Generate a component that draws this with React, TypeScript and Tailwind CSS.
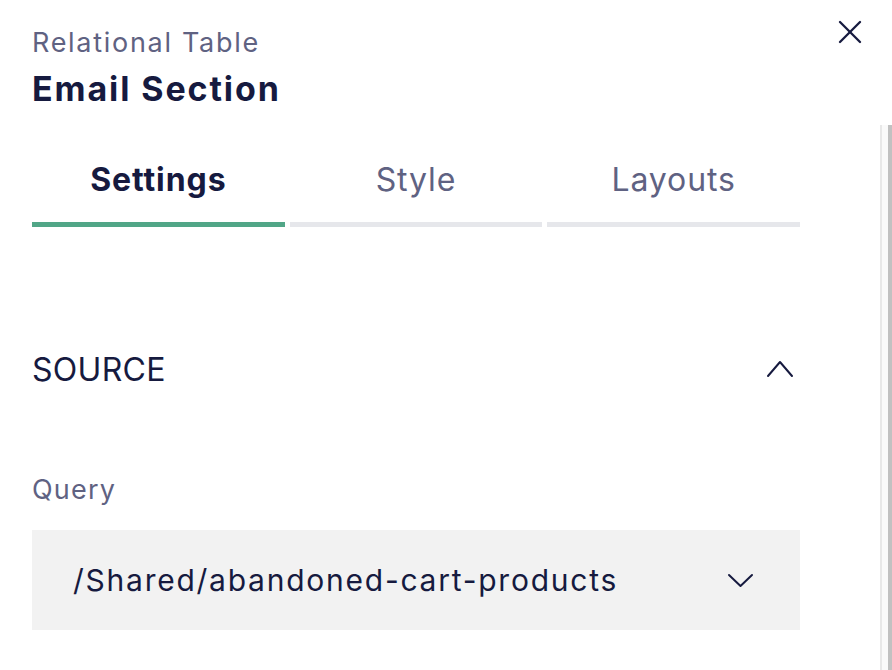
import { X } from 'lucide-react'

const tabs = ['Settings', 'Style', 'Layouts']

function Chevron({ up, w, h }: { up?: boolean; w: number; h: number }) {
  return (
    <svg width={w + 4} height={h + 4} viewBox={`0 0 ${w + 4} ${h + 4}`} fill="none" stroke="currentColor" strokeWidth={2} strokeLinecap="round" strokeLinejoin="round">
      {up ? (
        <path d={`M2 ${h + 2} L${w / 2 + 2} 2 L${w + 2} ${h + 2}`} />
      ) : (
        <path d={`M2 2 L${w / 2 + 2} ${h + 2} L${w + 2} 2`} />
      )}
    </svg>
  )
}

export default function App() {
  const active = 'Settings'

  return (
    <div className="w-[892px] h-[670px] bg-white flex flex-col overflow-hidden text-[#161a3f]" style={{ fontFamily: 'Inter, "Noto Sans", sans-serif' }}>
      <div className="h-[125px] shrink-0 flex justify-between pl-[32px] pr-[22px]">
        <div className="pt-[27px]">
          <div className="text-[27px] leading-[32px] tracking-[1.7px] text-[#5f6282]">Relational Table</div>
          <div className="mt-[10px] text-[34px] leading-[40px] font-bold tracking-[1.9px]">Email Section</div>
        </div>
        <button className="mt-[12px] h-[40px] w-[40px] flex items-center justify-center text-[#161a3f]">
          <X size={40} strokeWidth={1.4} />
        </button>
      </div>

      <div className="flex-1 flex">
        <div className="w-[880px] pl-[32px] pt-[35px]">
          <div className="w-[768px] grid grid-cols-3 gap-[5px]">
            {tabs.map(tab => (
              <button key={tab} className="flex flex-col items-center">
                <span className={`text-[32px] leading-[40px] tracking-[0.9px] ${tab === active ? 'font-bold text-[#161a3f]' : 'text-[#5f6282]'}`}>{tab}</span>
                <span className={`mt-[22px] h-[5px] w-full ${tab === active ? 'bg-[#51a687]' : 'bg-[#e6e7eb]'}`} />
              </button>
            ))}
          </div>

          <div className="w-[768px] mt-[123px] flex items-center justify-between">
            <span className="text-[32px] leading-[40px] tracking-[0.3px]">SOURCE</span>
            <span className="mr-[6px] mt-[-2px]">
              <Chevron up w={24} h={14} />
            </span>
          </div>

          <div className="mt-[84px] text-[27px] leading-[32px] tracking-[1.2px] text-[#5f6282]">Query</div>

          <div className="mt-[24px] w-[768px] h-[100px] bg-[#f2f2f2] flex items-center justify-between pl-[41px] pr-[46px]">
            <span className="text-[30px] leading-[36px] tracking-[1.75px]">/Shared/abandoned-cart-products</span>
            <Chevron w={23} h={11} />
          </div>
        </div>

        <div className="w-[12px] flex border-l-2 border-[#e8e8e8]">
          <div className="w-[6px] bg-[#fafafa]" />
          <div className="w-[4px] bg-[#c1c1c1]" />
        </div>
      </div>
    </div>
  )
}
